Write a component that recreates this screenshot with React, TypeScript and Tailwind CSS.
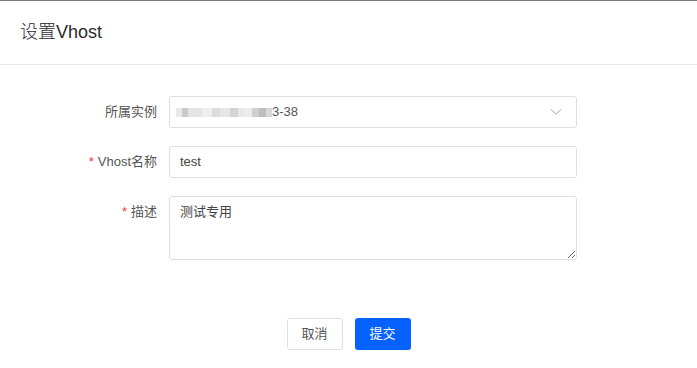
import React from "react";

const font = { fontFamily: '"Liberation Sans", "Noto Sans CJK SC", Arial, sans-serif' };

function Label({ text, required }: { text: string; required?: boolean }) {
  return (
    <div className="w-[157px] shrink-0 text-right text-[13px] text-[#555] leading-[32px]">
      {required && <span className="text-[#f5333f] mr-1">*</span>}
      {text}
    </div>
  );
}

export default function App() {
  const blocks = [
    ["#e9e9e9", 6], ["#c9c9c9", 6], ["#e4e4e4", 14], ["#eeeeee", 10], ["#dcdcdc", 8], ["#e6e6e6", 10],
    ["#d3d3d3", 8], ["#e8e8e8", 6], ["#ececec", 8], ["#cfcfcf", 7], ["#bdbdbd", 7], ["#d8d8d8", 6],
  ] as const;
  return (
    <div style={font} className="w-[697px] h-[368px] bg-white border-t border-[#7a7a7a] overflow-hidden">
      <div className="h-[64px] border-b border-[#e8e8e8] flex items-center pl-5">
        <span className="text-[18px] text-[#2a2a2a] font-light">设置Vhost</span>
      </div>
      <div className="pt-[31px] flex flex-col gap-[18px]">
        <div className="flex">
          <Label text="所属实例" />
          <div className="ml-3 w-[408px] h-[32px] border border-[#dcdfe6] rounded-[3px] flex items-center pl-[6px] pr-[14px]">
            <div className="flex items-center blur-[0.6px]">
              {blocks.map(([c, w], i) => (
                <span key={i} className="inline-block h-[9px]" style={{ background: c, width: w }} />
              ))}
            </div>
            <span className="text-[13px] text-[#555]">3-38</span>
            <div className="flex-1" />
            <svg width="12" height="8" viewBox="0 0 12 8" fill="none">
              <path d="M1 1.5 L6 6 L11 1.5" stroke="#c0c4cc" strokeWidth="1.1" />
            </svg>
          </div>
        </div>
        <div className="flex">
          <Label text="Vhost名称" required />
          <div className="ml-3 w-[408px] h-[32px] border border-[#dcdfe6] rounded-[3px] flex items-center pl-[10px] text-[13px] text-[#444]">
            test
          </div>
        </div>
        <div className="flex">
          <Label text="描述" required />
          <textarea
            style={font}
            defaultValue="测试专用"
            className="ml-3 w-[408px] h-[64px] border border-[#dcdfe6] rounded-[3px] px-[10px] pt-[5px] text-[13px] text-[#444] leading-[20px] outline-none"
          />
        </div>
      </div>
      <div className="mt-[58px] flex justify-center gap-3">
        <button className="w-[56px] h-[32px] border border-[#dcdfe6] rounded-[3px] bg-white text-[13px] text-[#555]">
          取消
        </button>
        <button className="w-[56px] h-[32px] rounded-[3px] bg-[#0561ff] text-[13px] text-white">
          提交
        </button>
      </div>
    </div>
  );
}
